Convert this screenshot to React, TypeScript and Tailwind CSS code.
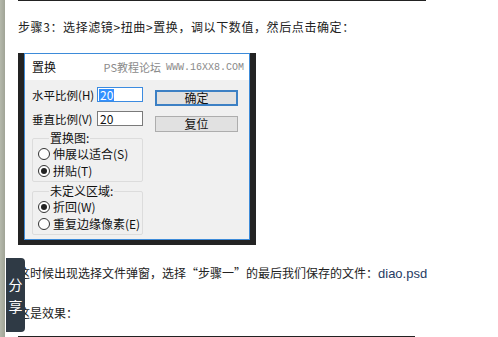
import React from "react";

const cjk = "font-['Noto_Sans_CJK_SC',sans-serif]";

function Radio({ checked, label }: { checked?: boolean; label: string }) {
  return (
    <div className="flex items-center h-[17px]">
      <div className="w-[12px] h-[12px] rounded-full border border-[#333] bg-white flex items-center justify-center">
        {checked && <div className="w-[6px] h-[6px] rounded-full bg-[#222]" />}
      </div>
      <span className="ml-[3px] text-[12px] leading-[14px] text-[#111]">{label}</span>
    </div>
  );
}

function Group({ title, children, className }: { title: string; children: React.ReactNode; className?: string }) {
  return (
    <fieldset className={"border border-[#dcdcdc] rounded-[2px] pl-[5px] pb-[2px] " + (className ?? "")}>
      <legend className="ml-[11px] px-[1px] text-[12px] leading-[14px] text-[#111]">{title}</legend>
      {children}
    </fieldset>
  );
}

function Dialog() {
  return (
    <div className="w-[238px] h-[192px] bg-[#232323] pl-[6px] pr-[6px] pb-[5px] flex">
      <div className="flex-1 border border-[#3d8bd9] flex flex-col">
        <div className="h-[26px] bg-white flex items-center pl-[7px] pr-[5px]">
          <span className="text-[12px] text-[#111]">置换</span>
          <span className="ml-auto text-[11px] text-[#8a8a8a] flex items-center">
            PS教程论坛
            <span className="ml-[5px] font-['Liberation_Mono',monospace] text-[10px]">WWW.16XX8.COM</span>
          </span>
        </div>
        <div className="flex-1 bg-[#f0f0f0] flex pl-[7px] pt-[7px]">
          <div className="w-[111px] flex flex-col">
            <div className="flex items-center h-[15px]">
              <span className="text-[11.5px] text-[#111] w-[65px] pt-[2px] whitespace-nowrap">水平比例(H)</span>
              <div className="w-[46px] h-[15px] border border-[#3c8be0] bg-white flex items-center pl-[1px]">
                <span className="bg-[#3390ff] text-white text-[12px] leading-[12px] px-[1px]">20</span>
              </div>
            </div>
            <div className="flex items-center h-[15px] mt-[9px]">
              <span className="text-[11.5px] text-[#111] w-[65px] pt-[2px] whitespace-nowrap">垂直比例(V)</span>
              <div className="w-[46px] h-[15px] border border-[#7a7a7a] bg-white flex items-center pl-[2px]">
                <span className="text-[#111] text-[12px] leading-[12px]">20</span>
              </div>
            </div>
            <Group title="置换图:" className="mt-[5px]">
              <Radio label="伸展以适合(S)" />
              <Radio checked label="拼贴(T)" />
            </Group>
            <Group title="未定义区域:" className="mt-[2px]">
              <Radio checked label="折回(W)" />
              <Radio label="重复边缘像素(E)" />
            </Group>
          </div>
          <div className="ml-[12px] w-[83px] flex flex-col pt-[3px]">
            <div className="h-[16px] border-2 border-[#3c80c4] bg-[#e1e1e1] flex items-center justify-center text-[12px] text-[#111]">确定</div>
            <div className="h-[16px] mt-[10px] border border-[#adadad] bg-[#e1e1e1] flex items-center justify-center text-[12px] text-[#111]">复位</div>
          </div>
        </div>
      </div>
    </div>
  );
}

export default function App() {
  return (
    <div className={"relative w-[498px] h-[337px] bg-white overflow-hidden flex " + cjk}>
      <div className="w-[5px] h-full bg-gradient-to-r from-[#b4b8ab] to-[#a0a496]" />
      <div className="pl-[13px] flex flex-col text-[#222]">
        <div className="h-px w-[408px] bg-[#222]" />
        <p className="mt-[18px] text-[12px] leading-[16px] tracking-[0.6px] whitespace-nowrap">步骤3：选择滤镜&gt;扭曲&gt;置换，调以下数值，然后点击确定：</p>
        <div className="mt-[18px]">
          <Dialog />
        </div>
        <p className="mt-[20px] text-[12px] leading-[16px] whitespace-nowrap">
          这时候出现选择文件弹窗，选择“步骤一”的最后我们保存的文件：
          <span className="font-['Liberation_Sans',sans-serif] text-[13px] text-[#263b63]">diao.psd</span>
        </p>
        <p className="mt-[23px] text-[12px] leading-[16px]">这是效果：</p>
        <div className="mt-[15px] h-px w-[397px] bg-[#222]" />
      </div>
      <div className="absolute left-[6px] top-[258px] w-[19px] h-[74px] bg-[#2f3a45] rounded-r-[4px] flex flex-col items-center justify-center text-white text-[14px] leading-[22px]">
        <span>分</span>
        <span>享</span>
      </div>
    </div>
  );
}
